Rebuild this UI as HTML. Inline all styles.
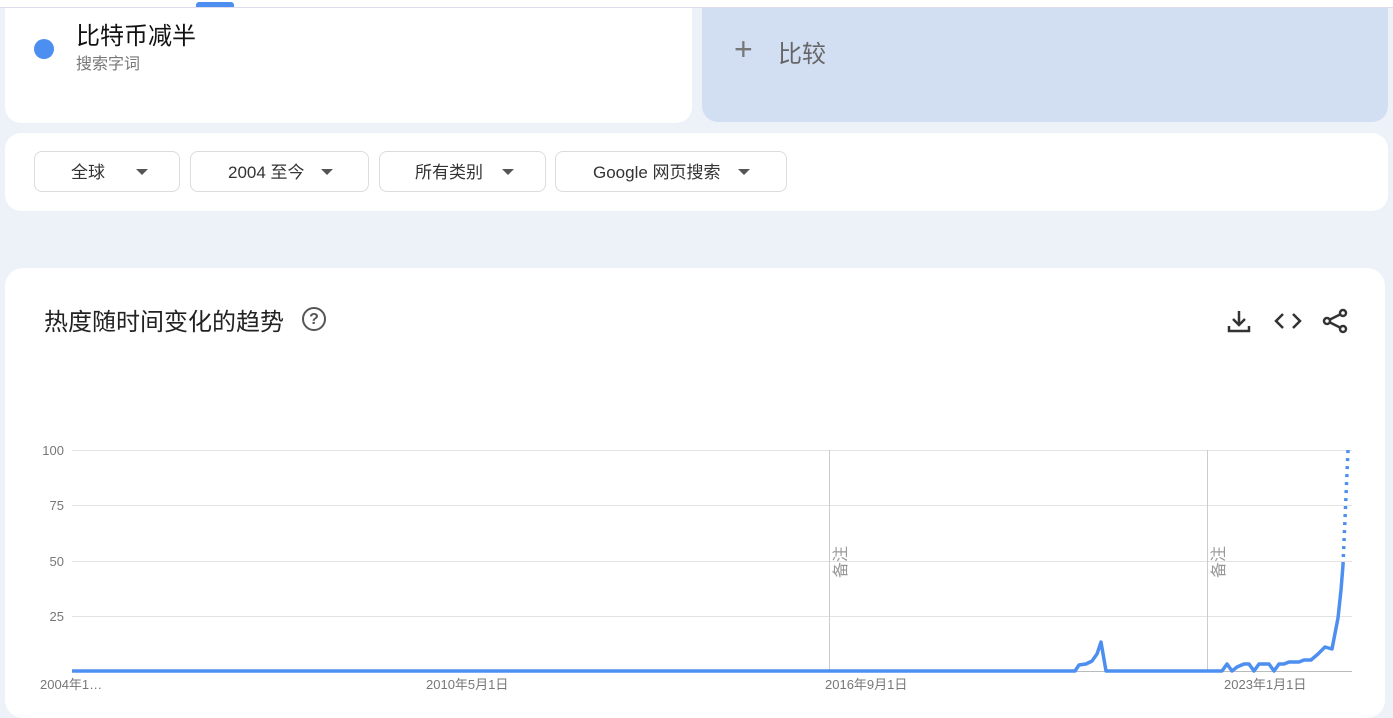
<!DOCTYPE html>
<html><head><meta charset="utf-8"><style>
body{margin:0;width:1393px;height:705px;background:#edf1f8;font-family:"Liberation Sans","Noto Sans CJK SC",sans-serif;position:relative;overflow:hidden}
.abs{position:absolute}
.card{background:#fff;position:absolute}
.btn{position:absolute;top:151px;height:41px;border:1px solid #dadce0;border-radius:8px;background:#fff;font-size:17px;color:#333;box-sizing:border-box;line-height:41px}
.tri{position:absolute;top:17px;width:0;height:0;border-left:6px solid transparent;border-right:6px solid transparent;border-top:6px solid #555}
</style></head><body>
<div class="abs" style="left:0;top:0;width:1393px;height:7px;background:#fff;border-bottom:1px solid #dde"></div>
<div class="abs" style="left:196px;top:2px;width:38px;height:5px;background:#4d8ff0;border-radius:3px 3px 0 0"></div>
<div class="card" style="left:5px;top:8px;width:687px;height:115px;border-radius:0 0 16px 16px"></div>
<div class="abs" style="left:34px;top:39px;width:20px;height:20px;border-radius:50%;background:#4d8ff0"></div>
<div class="abs" style="left:76px;top:16px;font-size:24px;color:#111">比特币减半</div>
<div class="abs" style="left:76px;top:50px;font-size:16px;color:#777">搜索字词</div>
<div class="abs" style="left:702px;top:8px;width:686px;height:114px;background:#d2dff3;border-radius:0 0 16px 16px"></div>
<div class="abs" style="left:734px;top:33px;font-size:32px;line-height:32px;color:#777;font-weight:300">+</div>
<div class="abs" style="left:778px;top:34px;font-size:24px;color:#666">比较</div>
<div class="card" style="left:5px;top:133px;width:1383px;height:78px;border-radius:16px"></div>
<div class="btn" style="left:34px;width:146px"><span style="position:absolute;left:36px">全球</span><div class="tri" style="left:101px"></div></div>
<div class="btn" style="left:190px;width:179px"><span style="position:absolute;left:37px">2004 至今</span><div class="tri" style="left:130px"></div></div>
<div class="btn" style="left:379px;width:167px"><span style="position:absolute;left:35px">所有类别</span><div class="tri" style="left:122px"></div></div>
<div class="btn" style="left:555px;width:232px"><span style="position:absolute;left:37px">Google 网页搜索</span><div class="tri" style="left:182px"></div></div>
<div class="card" style="left:5px;top:268px;width:1380px;height:450px;border-radius:18px"></div>
<div class="abs" style="left:44px;top:302px;font-size:24px;color:#222">热度随时间变化的趋势</div>
<div class="abs" style="left:302px;top:307px;width:20px;height:20px;border:2px solid #555;border-radius:50%;font-size:16px;text-align:center;line-height:21px;color:#555;font-weight:bold">?</div>
<svg class="abs" style="left:1226px;top:308px" width="130" height="26" viewBox="0 0 130 26" fill="none" stroke="#333" stroke-width="2.5">
<path d="M13 3v13M7 11l6 6 6-6M3 18v5h20v-5"/>
<path d="M57 6l-7 7 7 7M67 6l7 7-7 7"/>
<circle cx="117" cy="5" r="3"/><circle cx="101" cy="13" r="3"/><circle cx="117" cy="21" r="3"/><path d="M104 11.5l10-5M104 14.5l10 5"/>
</svg>
<svg class="abs" style="left:0;top:0" width="1393" height="705" font-family="Liberation Sans, Noto Sans CJK SC, sans-serif" font-size="13" fill="#777">
<g stroke="#e3e3e3" stroke-width="1"><path d="M72 450.5H1352M72 505.5H1352M72 561.5H1352M72 616.5H1352"/></g>
<path d="M829.5 450V671M1207.5 450V671" stroke="#ccc"/>
<path d="M72 671.5H1352" stroke="#bbb"/>
<text x="64" y="455" text-anchor="end">100</text><text x="64" y="510" text-anchor="end">75</text><text x="64" y="566" text-anchor="end">50</text><text x="64" y="621" text-anchor="end">25</text>
<text x="40" y="689">2004年1…</text><text x="426" y="689">2010年5月1日</text><text x="825" y="689">2016年9月1日</text><text x="1224" y="689">2023年1月1日</text>
<text font-size="16" fill="#999" transform="translate(846 578) rotate(-90)">备注</text>
<text font-size="16" fill="#999" transform="translate(1224 578) rotate(-90)">备注</text>
<polyline fill="none" stroke="#4d8ff0" stroke-width="3.5" stroke-linejoin="round" points="72,671 1075,671 1079,665 1086,664 1092,661 1097,654 1101,642 1106,671 1222,671 1227,664 1232,671 1237,667 1244,664 1249,664 1254,671 1259,664 1269,664 1274,671 1279,664 1284,664 1289,662 1299,662 1304,660 1311,660 1318,654 1325,647 1332,649 1338,618 1341,590 1343,565"/>
<path d="M1343 565L1348 450" stroke="#4d8ff0" stroke-width="3.5" stroke-dasharray="3 5" fill="none"/>
</svg>
</body></html>
